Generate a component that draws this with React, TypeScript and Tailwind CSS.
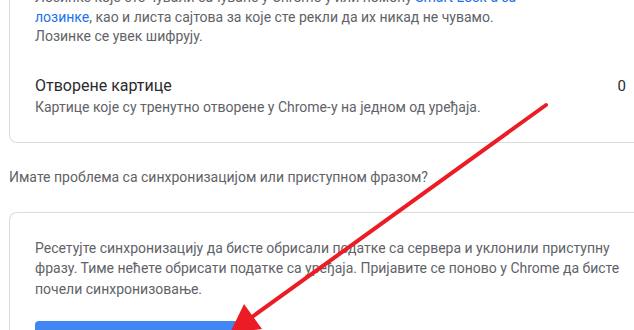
const problemText =
  "Ресетујте синхронизацију да бисте обрисали податке са сервера и уклонили приступну фразу. Тиме нећете обрисати податке са уређаја. Пријавите се поново у Chrome да бисте почели синхронизовање.";

export default function App() {
  return (
    <div className="relative w-[634px] h-[330px] overflow-hidden bg-white font-['Roboto',sans-serif]">
      <div className="w-[640px] pl-[9px]">
        <div className="-mt-[12px] rounded-b-lg border border-t-0 border-[#dadce0] w-[640px]">
          <div className="w-[525px] pl-[25px] pb-[10px] text-[14px] leading-[19.5px] text-[#5f6368]">
            Лозинке које сте чували сачуване у Chrome-у или помоћу{" "}
            <span className="text-[#1a73e8]">Smart Lock-а за лозинке</span>, као и листа сајтова за
            које сте рекли да их никад не чувамо.
            <br />
            Лозинке се увек шифрују.
          </div>
          <div className="flex items-start justify-between pl-[25px] pr-[22px] pt-[18px] pb-[24px]">
            <div>
              <div className="text-[16px] leading-[22px] text-[#2a2b2e]">Отворене картице</div>
              <div className="text-[14px] leading-[21px] text-[#5f6368]">
                Картице које су тренутно отворене у Chrome-у на једном од уређаја.
              </div>
            </div>
            <div className="text-[15px] leading-[22px] text-[#2a2b2e]">0</div>
          </div>
        </div>

        <div className="mt-[24px] text-[14px] leading-[20px] text-[#5f6368]">
          Имате проблема са синхронизацијом или приступном фразом?
        </div>

        <div className="mt-[25px] rounded-t-lg border border-b-0 border-[#dadce0] w-[640px] pl-[25px] pr-[20px] pt-[25px]">
          <p className="w-[595px] text-[14px] leading-[20.5px] text-[#5f6368]">{problemText}</p>
          <button className="mt-[22px] h-[36px] w-[210px] rounded-[4px] bg-[#4285f4]" />
        </div>
      </div>

      <svg className="absolute inset-0 pointer-events-none" width="634" height="330" viewBox="0 0 634 330">
        <line x1="546" y1="105" x2="252" y2="317" stroke="#ec1c24" strokeWidth="4" strokeLinecap="round" />
        <polygon points="230,333 262,329 244,304" fill="#ec1c24" />
      </svg>
    </div>
  );
}
